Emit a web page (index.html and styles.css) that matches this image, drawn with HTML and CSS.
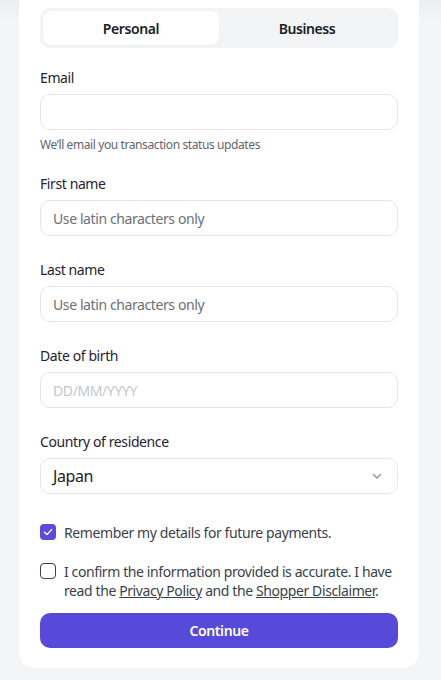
FILE: index.html
```html
<!DOCTYPE html>
<html>
<head>
<meta charset="utf-8">
<link rel="stylesheet" href="styles.css">
</head>
<body>
<div class="page">
  <div class="card">
    <div class="tabs">
      <div class="tab active">Personal</div>
      <div class="tab">Business</div>
    </div>

    <div class="field">
      <label class="label">Email</label>
      <div class="input"></div>
      <div class="help">We’ll email you transaction status updates</div>
    </div>

    <div class="field after-help">
      <label class="label">First name</label>
      <div class="input"><span class="ph">Use latin characters only</span></div>
    </div>

    <div class="field">
      <label class="label">Last name</label>
      <div class="input"><span class="ph">Use latin characters only</span></div>
    </div>

    <div class="field">
      <label class="label">Date of birth</label>
      <div class="input"><span class="ph light">DD/MM/YYYY</span></div>
    </div>

    <div class="field">
      <label class="label">Country of residence</label>
      <div class="input select">
        <span class="value">Japan</span>
        <svg class="chev" width="12" height="12" viewBox="0 0 12 12"><path d="M2.5 4.5 L6 8 L9.5 4.5" fill="none" stroke="#8a8f98" stroke-width="1.3" stroke-linecap="round" stroke-linejoin="round"/></svg>
      </div>
    </div>

    <div class="check-row first">
      <span class="box checked">
        <svg width="16" height="16" viewBox="0 0 16 16"><path d="M4.5 8.2 L7 10.6 L11.5 5.6" fill="none" stroke="#fff" stroke-width="1.4" stroke-linecap="round" stroke-linejoin="round"/></svg>
      </span>
      <span class="check-text">Remember my details for future payments.</span>
    </div>

    <div class="check-row second">
      <span class="box"></span>
      <div class="check-text">
        <div class="line">I confirm the information provided is accurate. I have</div>
        <div class="line">read the <a href="#">Privacy Policy</a> and the <a href="#">Shopper Disclaimer</a>.</div>
      </div>
    </div>

    <button class="btn">Continue</button>
  </div>
</div>
</body>
</html>
```
FILE: styles.css
```css
* { box-sizing: border-box; }
html, body {
  margin: 0;
  padding: 0;
}
body {
  background: #f4f5f7;
  font-family: "Noto Sans", "Open Sans", sans-serif;
  letter-spacing: -0.4px;
  color: #1f2430;
  width: 441px;
  height: 680px;
  overflow: hidden;
}
.page {
  padding: 0 22px 12px 19px;
  background: linear-gradient(to bottom, #eceef1 0, #f4f5f7 20px);
}
.card {
  background: #fff;
  border-radius: 0 0 16px 16px;
  padding: 8px 21px 20px 21px;
  display: flex;
  flex-direction: column;
}
.tabs {
  display: grid;
  grid-template-columns: 1fr 1fr;
  background: #f3f4f6;
  border-radius: 10px;
  padding: 3px;
  height: 40px;
}
.tab {
  display: flex;
  align-items: center;
  justify-content: center;
  font-size: 14px;
  font-weight: 600;
  color: #1a1d24;
  border-radius: 8px;
}
.tab.active {
  background: #fff;
  box-shadow: 0 1px 2px rgba(0,0,0,0.04);
}
.field {
  display: flex;
  flex-direction: column;
  margin-top: 24px;
}
.tabs + .field { margin-top: 20px; }
.field.after-help { margin-top: 21px; }
.label {
  font-size: 14px;
  line-height: 20px;
  color: #1f2430;
  margin-bottom: 6px;
}
.input {
  height: 36px;
  border: 1px solid #e4e6ea;
  border-radius: 10px;
  display: flex;
  align-items: center;
  padding: 0 12px;
  background: #fff;
}
.ph {
  font-size: 14px;
  color: #6b7078;
}
.ph.light { color: #c4c7cd; }
.help {
  font-size: 12px;
  line-height: 16px;
  color: #5f6570;
  margin-top: 7px;
}
.select { justify-content: space-between; padding-right: 14px; }
.value { font-size: 16px; color: #1a1d24; }
.chev { display: block; }
.check-row {
  display: flex;
  align-items: flex-start;
  gap: 8px;
}
.check-row.first { margin-top: 30px; }
.check-row.second { margin-top: 21px; }
.box {
  flex: none;
  width: 16px;
  height: 16px;
  border: 1.5px solid #3b3f48;
  border-radius: 4px;
  display: flex;
}
.check-row.second .box { margin-top: 1px; }
.box.checked {
  border: none;
  background: #5b4cdb;
}
.check-text {
  font-size: 14px;
  line-height: 17px;
  color: #3a3f4a;
}
.check-text .line {
  line-height: 19px;
  white-space: nowrap;
}
.check-text a {
  color: #3a3f4a;
  text-decoration: underline;
}
.btn {
  margin-top: 13px;
  height: 35px;
  border: none;
  border-radius: 10px;
  background: #574adb;
  color: #fff;
  font-family: inherit;
  letter-spacing: inherit;
  font-size: 14px;
  font-weight: 600;
}
```
